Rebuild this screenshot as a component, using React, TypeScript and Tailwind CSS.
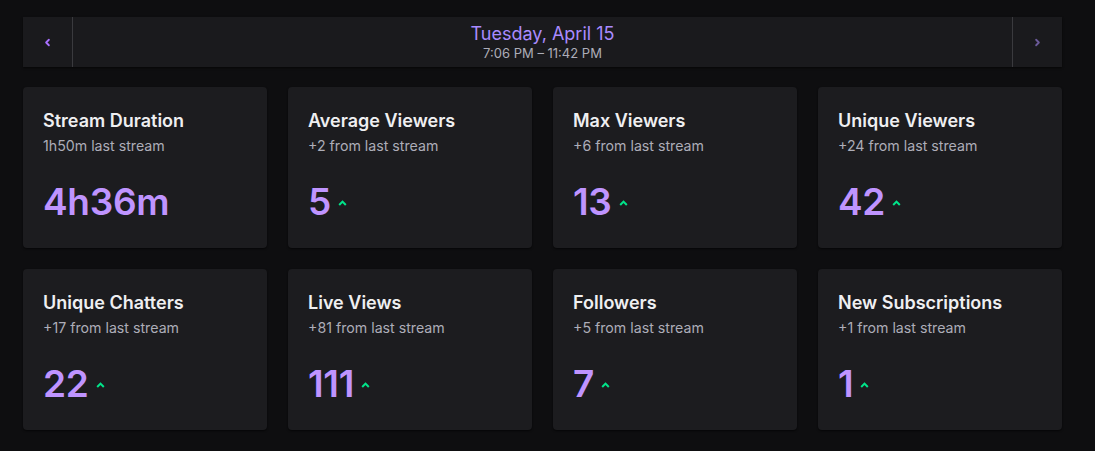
import { ChevronLeft, ChevronRight } from "lucide-react";

interface Stat {
  title: string;
  sub: string;
  value: string;
  up: boolean;
}

const STATS: Stat[] = [
  { title: "Stream Duration", sub: "1h50m last stream", value: "4h36m", up: false },
  { title: "Average Viewers", sub: "+2 from last stream", value: "5", up: true },
  { title: "Max Viewers", sub: "+6 from last stream", value: "13", up: true },
  { title: "Unique Viewers", sub: "+24 from last stream", value: "42", up: true },
  { title: "Unique Chatters", sub: "+17 from last stream", value: "22", up: true },
  { title: "Live Views", sub: "+81 from last stream", value: "111", up: true },
  { title: "Followers", sub: "+5 from last stream", value: "7", up: true },
  { title: "New Subscriptions", sub: "+1 from last stream", value: "1", up: true },
];

function UpCaret() {
  return (
    <svg width="9" height="6" viewBox="0 0 9 6" className="ml-[7px] mt-[2px]">
      <path d="M1.2 5 L4.5 1.6 L7.8 5" fill="none" stroke="#00e58a" strokeWidth="2" />
    </svg>
  );
}

function StatCard({ stat }: { stat: Stat }) {
  return (
    <div className="h-[161px] rounded-[4px] bg-[#1c1c1f] p-5 shadow-[0_1px_2px_rgba(0,0,0,0.6)]">
      <h3 className="text-[18px] font-semibold leading-[27px] text-[#efeff1]">{stat.title}</h3>
      <p className="mt-[2px] text-[14.2px] leading-[20px] text-[#adadb8]">{stat.sub}</p>
      <div className="mt-[27px] flex items-center">
        <span className="text-[37px] font-semibold leading-[38px] tracking-[-0.3px] text-[#bf94ff]">
          {stat.value}
        </span>
        {stat.up && <UpCaret />}
      </div>
    </div>
  );
}

export default function App() {
  return (
    <div className="min-h-[451px] bg-[#0e0e10] pl-[23px] pt-[17px] font-['Inter','Noto_Sans',sans-serif]">
      <div className="w-[1039px]">
        {/* date switcher */}
        <div className="flex h-[50px] bg-[#1a1a1d] shadow-[0_1px_2px_rgba(0,0,0,0.6)]">
          <button
            type="button"
            className="flex w-[50px] items-center justify-center border-r border-[#3a3a3e] text-[#a970ff]"
          >
            <ChevronLeft size={11} strokeWidth={4} />
          </button>
          <div className="flex flex-1 flex-col items-center justify-center">
            <span className="mt-[-1px] text-[18px] leading-[22px] text-[#a98bff]">Tuesday, April 15</span>
            <span className="text-[13px] leading-[16px] text-[#adadb8]">7:06 PM – 11:42 PM</span>
          </div>
          <button
            type="button"
            className="flex w-[50px] items-center justify-center border-l border-[#3a3a3e] text-[#6b5a99]"
          >
            <ChevronRight size={11} strokeWidth={4} />
          </button>
        </div>

        <div className="mt-5 grid grid-cols-4 gap-[21px]">
          {STATS.map((s) => (
            <StatCard key={s.title} stat={s} />
          ))}
        </div>
      </div>
    </div>
  );
}
